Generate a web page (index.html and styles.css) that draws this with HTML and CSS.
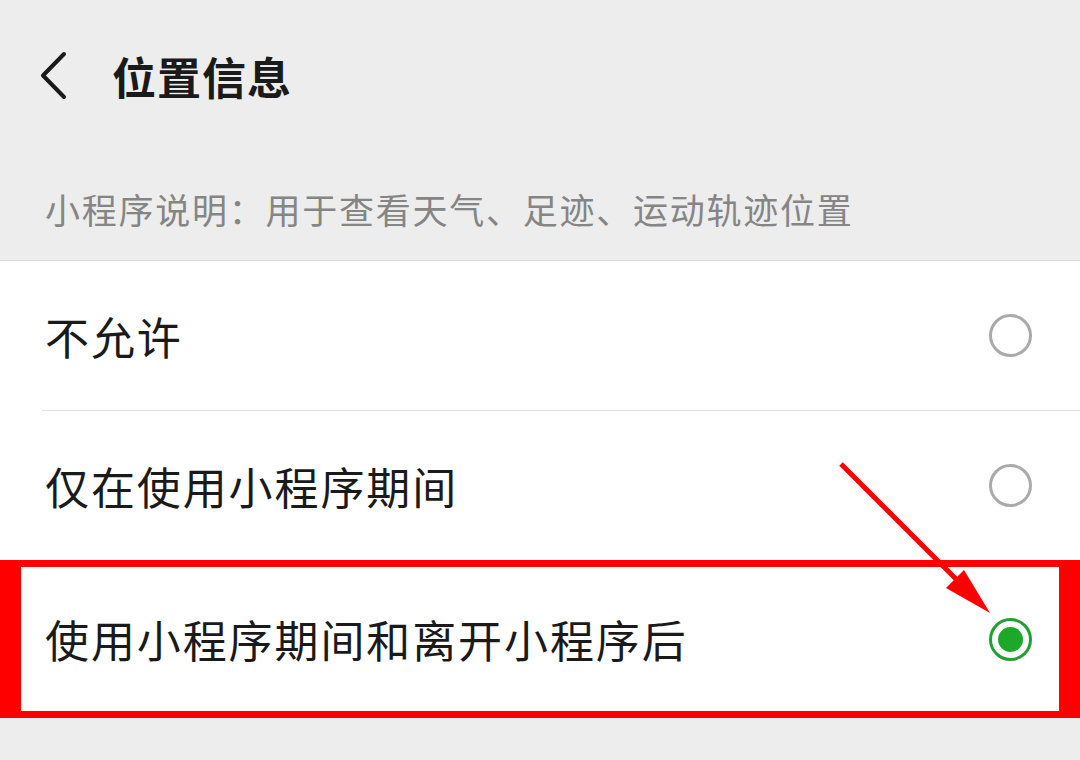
FILE: index.html
```html
<!DOCTYPE html>
<html lang="zh-CN">
<head>
    <meta charset="UTF-8">
    <meta name="viewport" content="width=device-width, initial-scale=1.0">
    <title>位置信息</title>
    <link rel="stylesheet" href="styles.css">
</head>
<body>
    <!-- Top bar -->
    <div class="topbar">
        <svg class="back" width="30" height="50" viewBox="0 0 30 50">
            <polyline points="25,3 4,24.5 25,46" fill="none" stroke="#1a1a1a" stroke-width="4" stroke-linecap="round" stroke-linejoin="round"/>
        </svg>
        <h1>位置信息</h1>
    </div>

    <p class="desc">小程序说明：用于查看天气、足迹、运动轨迹位置</p>

    <!-- Permission options -->
    <div class="options">
        <div class="row">
            <span>不允许</span>
            <span class="radio"></span>
        </div>
        <div class="row">
            <span>仅在使用小程序期间</span>
            <span class="radio"></span>
        </div>
        <div class="row highlight">
            <span>使用小程序期间和离开小程序后</span>
            <span class="radio checked"></span>
        </div>
    </div>

    <!-- Annotation arrow -->
    <svg class="arrow" width="1080" height="760" viewBox="0 0 1080 760">
        <line x1="841" y1="464" x2="970" y2="593" stroke="#ff0000" stroke-width="5"/>
        <polygon points="990,613 946,588 964,570" fill="#ff0000"/>
    </svg>
</body>
</html>
```

FILE: styles.css
```css
body {
    margin: 0;
    background-color: #ededed;
    font-family: "Noto Sans CJK SC", "Noto Sans", sans-serif;
    color: #1a1a1a;
    width: 1080px;
    height: 760px;
    overflow: hidden;
    position: relative;
}
.topbar {
    height: 152px;
    display: flex;
    align-items: center;
    padding-left: 39px;
}
.back {
    margin-right: 43px;
}
.topbar h1 {
    margin: 0;
    font-size: 44px;
    font-weight: 700;
    letter-spacing: 1px;
}
.desc {
    margin: 0;
    height: 108px;
    padding-left: 45px;
    font-size: 35px;
    letter-spacing: 1.75px;
    color: #858585;
    line-height: 1;
    padding-top: 39px;
    box-sizing: border-box;
}
.options {
    background-color: #fff;
    border-top: 1px solid #dcdcdc;
}
.row {
    height: 149px;
    display: flex;
    align-items: center;
    justify-content: space-between;
    padding: 0 48px 0 3px;
    margin-left: 42px;
    font-size: 44px;
    letter-spacing: 1.9px;
    border-bottom: 1px solid #e2e2e2;
}
.row:nth-child(2) {
    border-bottom: none;
    margin-left: 0;
    padding-left: 45px;
}
.row.highlight {
    height: 144px;
    margin-left: 0;
    border: solid #ff0000;
    border-width: 7px 21px;
    padding: 0 27px 0 24px;
}
.radio {
    width: 37px;
    height: 37px;
    border: 3px solid #aaaaaa;
    border-radius: 50%;
    box-sizing: content-box;
    position: relative;
}
.radio.checked {
    border-color: #23a033;
}
.radio.checked::after {
    content: "";
    position: absolute;
    left: 6px;
    top: 6px;
    width: 25px;
    height: 25px;
    border-radius: 50%;
    background-color: #1ea82a;
}
.arrow {
    position: absolute;
    left: 0;
    top: 0;
    pointer-events: none;
}
```
